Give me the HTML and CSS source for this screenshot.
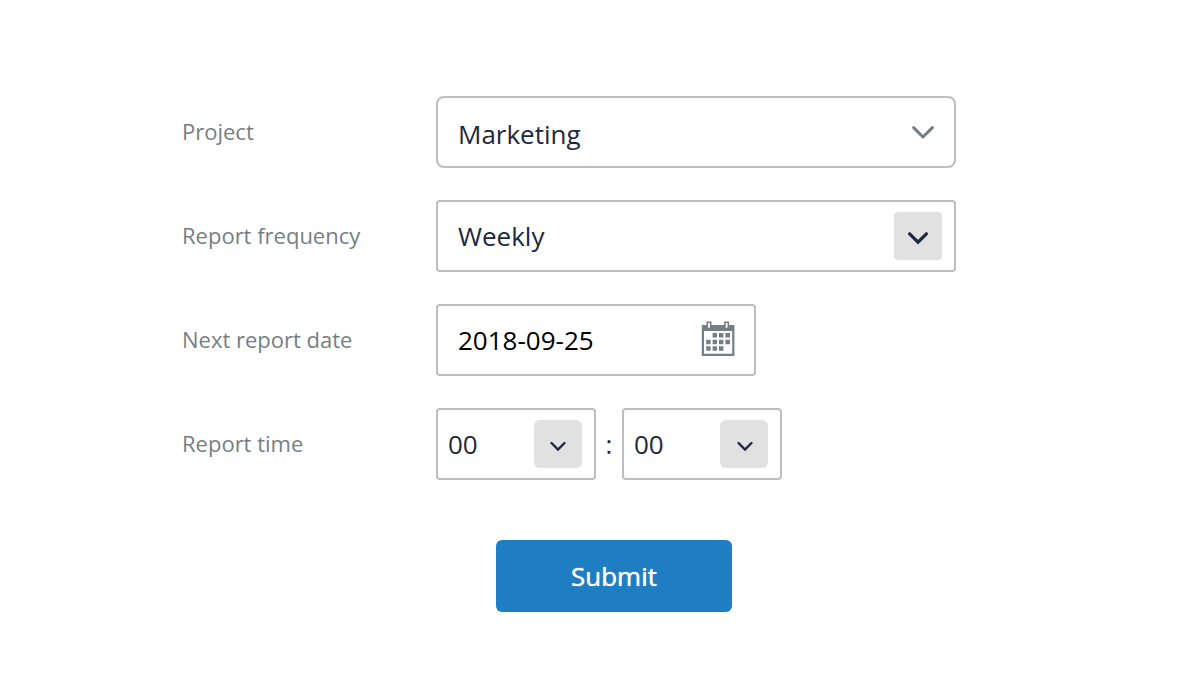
FILE: index.html
```html
<!DOCTYPE html>
<html lang="en">
<head>
<meta charset="utf-8">
<title>Report schedule</title>
<meta name="viewport" content="width=device-width, initial-scale=1">
<link rel="stylesheet" href="styles.css">
</head>
<body>
<form class="form">
  <div class="row">
    <label class="label" for="project">Project</label>
    <div class="field field-wide field-round">
      <select class="control control-low" id="project"><option>Marketing</option></select>
      <svg class="chevron" width="24" height="16" viewBox="0 0 24 16" aria-hidden="true"><path d="M2.600 3.600l9.400 9.400 9.400-9.400" stroke-width="3"/></svg>
    </div>
  </div>
  <div class="row">
    <label class="label" for="frequency">Report frequency</label>
    <div class="field field-wide">
      <select class="control" id="frequency"><option>Weekly</option></select>
      <span class="arrow"><svg width="48" height="48" viewBox="0 0 48 48" aria-hidden="true"><path d="M15.600 21.800l8.400 8.400 8.400-8.400" stroke-width="3.200"/></svg></span>
    </div>
  </div>
  <div class="row">
    <label class="label" for="date">Next report date</label>
    <div class="field field-date">
      <input class="control control-date" id="date" type="text" value="2018-09-25">
      <svg class="calendar" width="34" height="36" viewBox="0 0 34 36" aria-hidden="true">
        <path class="ink" fill-rule="evenodd" d="M.8 4h32.600v31H.8zM3 10v22.800h28.200V10z"/>
        <path class="ring" d="M6.300 1.300h3.400v6.200H6.300zM23.900 1.300h3.400v6.200h-3.400z"/>
        <path class="ink" d="M11.600 12H16v4.500h-4.400zM18 12h4.400v4.500H18zM24.400 12h4.600v4.500h-4.600zM5.200 18.700h4.400v4.500H5.200zM11.600 18.700H16v4.500h-4.400zM18 18.700h4.400v4.500H18zM24.400 18.700h4.600v4.500h-4.600zM5.200 25.300h4.400v4.500H5.200zM11.600 25.300H16v4.500h-4.400zM18 25.300h4.400v4.500H18z"/>
      </svg>
    </div>
  </div>
  <div class="row">
    <label class="label" for="hour">Report time</label>
    <div class="time">
      <div class="field field-time">
        <select class="control control-time" id="hour"><option>00</option></select>
        <span class="arrow arrow-round"><svg width="48" height="48" viewBox="0 0 48 48" aria-hidden="true"><path d="M17.500 23l6.500 6.500 6.500-6.500" stroke-width="2.400"/></svg></span>
      </div>
      <span class="colon">:</span>
      <div class="field field-time">
        <select class="control control-time" id="minute" aria-label="Report minute"><option>00</option></select>
        <span class="arrow arrow-round"><svg width="48" height="48" viewBox="0 0 48 48" aria-hidden="true"><path d="M18.500 23l6.500 6.500 6.500-6.500" stroke-width="2.400"/></svg></span>
      </div>
    </div>
  </div>
  <button class="submit" type="submit">Submit</button>
</form>
</body>
</html>
```
FILE: styles.css
```css
* {
  box-sizing: border-box;
}

body {
  margin: 0;
  background: #fff;
  color: #20283d;
  font-family: "Open Sans", "Noto Sans", sans-serif;
  font-size: 26px;
}

.form {
  display: flex;
  flex-direction: column;
  gap: 32px;
  padding: 96px 15% 72px;
}

.row {
  display: grid;
  grid-template-columns: 256px minmax(0, 1fr);
  align-items: center;
}

.label {
  padding: 0 0 2px 2px;
  color: #757f82;
  font-size: 22px;
  line-height: 32px;
}

.field {
  display: grid;
  align-items: center;
  height: 72px;
  border: 2px solid #bebebe;
  border-radius: 4px;
}

.field > * {
  grid-area: 1 / 1;
}

.field-wide {
  max-width: 520px;
}

.field-round {
  border-radius: 8px;
}

.field-date {
  max-width: 320px;
}

.field-time {
  width: 160px;
}

.control {
  width: 100%;
  height: 68px;
  margin: 0;
  padding: 0 20px;
  border: 0;
  border-radius: 4px;
  background: transparent;
  color: inherit;
  font: inherit;
  appearance: none;
}

.control-low {
  padding-top: 4px;
}

.control-date {
  color: #000;
}

.control-time {
  padding: 0 10px;
}

.chevron,
.arrow,
.calendar {
  justify-self: end;
  pointer-events: none;
}

.chevron,
.arrow svg {
  display: block;
  fill: none;
  stroke: #20283d;
  stroke-linecap: round;
}

.chevron {
  margin-right: 19px;
  stroke: #757f82;
}

.arrow {
  margin-right: 12px;
  border-radius: 4px;
  background: #e1e1e1;
}

.arrow-round {
  border-radius: 6px;
}

.calendar {
  margin-right: 19px;
  margin-bottom: 2px;
}

.ink {
  fill: #757f82;
}

.ring {
  fill: #fff;
  stroke: #757f82;
  stroke-width: 1.6;
}

.time {
  display: flex;
  align-items: center;
}

.colon {
  width: 26px;
  text-align: center;
}

.submit {
  width: 236px;
  height: 72px;
  margin: 28px 0 0 316px;
  padding: 0;
  border: 0;
  border-radius: 6px;
  background: #1f7ec2;
  color: #fff;
  font: inherit;
  text-shadow: 0 0 1px #fff;
  cursor: pointer;
}
```
